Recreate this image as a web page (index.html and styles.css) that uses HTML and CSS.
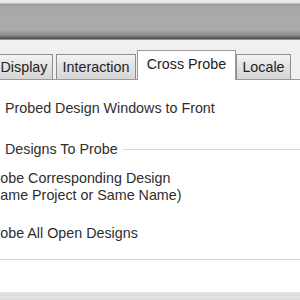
FILE: index.html
```html
<!DOCTYPE html>
<html lang="en">
<head>
    <meta charset="UTF-8">
    <title>Preferences - Cross Probe</title>
    <link rel="stylesheet" href="styles.css">
</head>
<body>
    <div class="window">
        <div class="titlebar"></div>
        <div class="tab-strip">
            <div class="tab tab-display">Display</div>
            <div class="tab tab-interaction">Interaction</div>
            <div class="tab tab-active">Cross Probe</div>
            <div class="tab tab-locale">Locale</div>
        </div>
        <div class="panel">
            <div class="option option-top">Probed Design Windows to Front</div>
            <div class="group-title">
                <span>Designs To Probe</span>
                <div class="group-line"></div>
            </div>
            <div class="radio">
                <div>Probe Corresponding Design</div>
                <div>(Same Project or Same Name)</div>
            </div>
            <div class="radio radio-last">
                <div>Probe All Open Designs</div>
            </div>
            <div class="separator"></div>
        </div>
        <div class="footer"></div>
    </div>
</body>
</html>
```
FILE: styles.css
```css
body {
    margin: 0;
    font-family: "Liberation Sans", Arial, sans-serif;
    font-size: 14.3px;
    color: #2e2e2e;
    background: #f0f0f0;
}
.window {
    width: 300px;
    height: 300px;
    overflow: hidden;
    display: flex;
    flex-direction: column;
}
.titlebar {
    height: 40px;
    flex-shrink: 0;
    background: linear-gradient(to bottom, #ececec 0, #e4e4e4 3px, #9a9a9a 4px, #a9a9a9 8px, #aaaaaa 30px, #8e8e8e 35px, #5a5a5a 38px, #4a4a4a 39px, #d8d8d8 40px);
}
.tab-strip {
    height: 40px;
    flex-shrink: 0;
    display: flex;
    align-items: flex-end;
    background: #f0f0f0;
    border-bottom: 1px solid #9a9a9a;
    box-sizing: border-box;
}
.tab {
    height: 24px;
    line-height: 24px;
    text-align: center;
    box-sizing: content-box;
    border: 1px solid #8f8f8f;
    border-bottom: none;
    background: linear-gradient(to bottom, #f4f4f4, #e2e2e2 50%, #d6d6d6);
    color: #222;
}
.tab-display {
    width: 52px;
    border-left: none;
    text-indent: -4px;
}
.tab-interaction {
    width: 78px;
    margin-left: 3px;
}
.tab-active {
    width: 97px;
    height: 29px;
    line-height: 26px;
    margin-left: 1px;
    margin-bottom: -1px;
    background: #fff;
    border-color: #9a9a9a;
}
.tab-locale {
    width: 53px;
}
.panel {
    flex: 1;
    background: #fff;
    display: flex;
    flex-direction: column;
}
.option-top {
    padding: 20px 0 0 5px;
}
.group-title {
    display: flex;
    align-items: center;
    margin-top: 25px;
    padding-left: 5px;
}
.group-line {
    flex: 1;
    height: 1px;
    margin-left: 5px;
    background: #d6d6d6;
}
.radio {
    margin: 13px 0 0 -14px;
    line-height: 17px;
}
.radio-last {
    margin-top: 21px;
}
.separator {
    height: 1px;
    background: #d4d4d4;
    margin-top: 17px;
}
.footer {
    height: 8px;
    flex-shrink: 0;
    background: linear-gradient(to bottom, #e6e6e6, #d9d9d9 3px, #e4e4e4 5px, #d8d8d8);
}
```
